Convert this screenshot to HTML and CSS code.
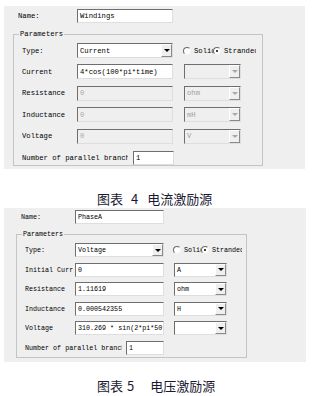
FILE: index.html
```html
<!DOCTYPE html>
<html lang="zh">
<head>
    <meta charset="UTF-8">
    <meta name="viewport" content="width=device-width, initial-scale=1.0">
    <title>激励源设置</title>
    <link rel="stylesheet" href="styles.css">
</head>
<body>
    <!-- Source de courant -->
    <div class="dlg dlg-current">
        <div class="name-row">
            <span class="lbl">Name:</span>
            <span class="field">Windings</span>
        </div>
        <fieldset class="params">
            <legend>Parameters</legend>
            <div class="grid">
                <span class="lbl">Type:</span>
                <div class="select"><span class="val">Current</span><span class="arrow"></span></div>
                <div class="radios">
                    <span class="opt"><i class="dot"></i>Solid</span>
                    <span class="opt on"><i class="dot"></i>Stranded</span>
                </div>

                <span class="lbl">Current</span>
                <span class="field">4*cos(100*pi*time)</span>
                <div class="select unit off"><span class="val"></span><span class="arrow"></span></div>

                <span class="lbl">Resistance</span>
                <span class="field off">0</span>
                <div class="select unit off"><span class="val">ohm</span><span class="arrow"></span></div>

                <span class="lbl">Inductance</span>
                <span class="field off">0</span>
                <div class="select unit off"><span class="val">mH</span><span class="arrow"></span></div>

                <span class="lbl">Voltage</span>
                <span class="field off">0</span>
                <div class="select unit off"><span class="val">V</span><span class="arrow"></span></div>
            </div>
            <div class="branch-row">
                <span class="lbl">Number of parallel branches</span>
                <span class="field">1</span>
            </div>
        </fieldset>
    </div>

    <p class="caption cap-4">图表<span class="num">4</span>电流激励源</p>

    <!-- Source de tension -->
    <div class="dlg dlg-voltage">
        <div class="name-row">
            <span class="lbl">Name:</span>
            <span class="field">PhaseA</span>
        </div>
        <fieldset class="params">
            <legend>Parameters</legend>
            <div class="grid">
                <span class="lbl">Type:</span>
                <div class="select"><span class="val">Voltage</span><span class="arrow"></span></div>
                <div class="radios">
                    <span class="opt"><i class="dot"></i>Solid</span>
                    <span class="opt on"><i class="dot"></i>Stranded</span>
                </div>

                <span class="lbl">Initial Current</span>
                <span class="field">0</span>
                <div class="select unit"><span class="val">A</span><span class="arrow"></span></div>

                <span class="lbl">Resistance</span>
                <span class="field">1.11619</span>
                <div class="select unit"><span class="val">ohm</span><span class="arrow"></span></div>

                <span class="lbl">Inductance</span>
                <span class="field">0.000542355</span>
                <div class="select unit"><span class="val">H</span><span class="arrow"></span></div>

                <span class="lbl">Voltage</span>
                <span class="field">310.269 * sin(2*pi*50*time)</span>
                <div class="select unit"><span class="val"></span><span class="arrow"></span></div>
            </div>
            <div class="branch-row">
                <span class="lbl">Number of parallel branches</span>
                <span class="field">1</span>
            </div>
        </fieldset>
    </div>

    <p class="caption cap-5">图表<span class="num">5</span>电压激励源</p>
</body>
</html>
```

FILE: styles.css
```css
/* Page */
body { margin: 0; background: #fff; font-family: "Liberation Mono", "DejaVu Sans Mono", monospace; color: #000; }

/* Boite de dialogue */
.dlg { background: #efefef; box-sizing: border-box; overflow: hidden; }
.dlg-current { margin: 6px 0 0 4px; width: 301px; height: 163px; font-size: 7.2px; }
.dlg-voltage { margin: 0 0 0 4px; width: 302px; height: 154px; font-size: 6.7px; }

.lbl { white-space: nowrap; overflow: hidden; }

.name-row { display: flex; align-items: center; }
.dlg-current .name-row { padding: 3px 0 0 14px; }
.dlg-current .name-row .lbl { width: 59px; }
.dlg-current .name-row .field { width: 96px; height: 14px; }
.dlg-voltage .name-row { padding: 2px 0 0 17px; }
.dlg-voltage .name-row .lbl { width: 54px; }
.dlg-voltage .name-row .field { width: 89px; height: 14px; }

/* Champs */
.field { box-sizing: border-box; display: flex; align-items: center; padding: 0 2px; background: #fff; border: 1px solid; border-color: #6e6e6e #dedede #dedede #6e6e6e; white-space: nowrap; overflow: hidden; }
.field.off { background: #efefef; color: #a8a8a8; }

.select { box-sizing: border-box; display: flex; background: #fff; border: 1px solid; border-color: #6e6e6e #dedede #dedede #6e6e6e; }
.select .val { flex: 1; display: flex; align-items: center; padding-left: 2px; white-space: nowrap; overflow: hidden; }
.select .arrow { box-sizing: border-box; width: 11px; display: flex; align-items: center; justify-content: center; background: #efefef; border: 1px solid; border-color: #fff #8a8a8a #8a8a8a #fff; }
.select .arrow::after { content: ""; border-left: 3px solid transparent; border-right: 3px solid transparent; border-top: 3px solid #000; }
.select.off { background: #efefef; color: #a0a0a0; }
.select.off .arrow::after { border-top-color: #a8a8a8; }

/* Groupe Parameters */
.params { box-sizing: border-box; min-width: 0; margin: 0; border: 1px solid #c4c4c4; padding: 4px 0 0 8px; }
.params legend { padding: 0 1px; margin-left: -3px; line-height: 10px; }
.dlg-current .params { margin: 6px 0 0 9px; width: 250px; height: 137px; }
.dlg-voltage .params { margin: 5px 0 0 12px; width: 231px; height: 129px; }

.grid { display: grid; align-items: stretch; }
.grid > .lbl { display: flex; align-items: center; }
.dlg-current .grid { grid-template-columns: 55px 96px 68px; grid-auto-rows: 15px; row-gap: 6.4px; }
.dlg-current .grid > .lbl { margin-right: 12px; }
.dlg-current .grid > .unit { margin-left: 11px; }
.dlg-current .radios { margin-left: 10px; }
.dlg-voltage .grid { grid-template-columns: 50px 89px 63px; grid-auto-rows: 14px; row-gap: 5.6px; }
.dlg-voltage .grid > .lbl { margin-right: 2px; }
.dlg-voltage .grid > .unit { margin-left: 10px; }
.dlg-voltage .radios { margin-left: 9px; }

/* Boutons radio */
.radios { display: flex; align-items: center; }
.opt { display: flex; align-items: center; gap: 3px; white-space: nowrap; overflow: hidden; flex: none; }
.dlg-current .opt:first-child { width: 30px; }
.dlg-current .opt:last-child { width: 43px; }
.dlg-voltage .opt:first-child { width: 28px; }
.dlg-voltage .opt:last-child { width: 41px; }
.dot { box-sizing: border-box; flex: none; width: 8px; height: 8px; border-radius: 50%; background: #fff; border: 1px solid; border-color: #6a6a6a #f4f4f4 #f4f4f4 #6a6a6a; display: flex; align-items: center; justify-content: center; }
.opt.on .dot::after { content: ""; width: 2px; height: 2px; border-radius: 50%; background: #000; }

.branch-row { display: flex; align-items: center; }
.dlg-current .branch-row { margin-top: 7px; height: 15px; }
.dlg-current .branch-row .lbl { width: 106px; margin-right: 5px; }
.dlg-current .branch-row .field { width: 41px; height: 14px; }
.dlg-voltage .branch-row { margin-top: 5.6px; height: 14px; }
.dlg-voltage .branch-row .lbl { width: 97px; margin-right: 4px; }
.dlg-voltage .branch-row .field { width: 38px; height: 14px; }

/* Legendes */
.caption { margin: 0; padding-left: 97px; font-family: "Noto Sans CJK SC", sans-serif; font-size: 13px; line-height: 19px; color: #1a1a33; }
.cap-4 { margin-top: 20px; }
.cap-4 .num { margin: 0 9px 0 8px; }
.cap-5 { margin-top: 14px; }
.cap-5 .num { margin: 0 16px 0 4px; }
```
